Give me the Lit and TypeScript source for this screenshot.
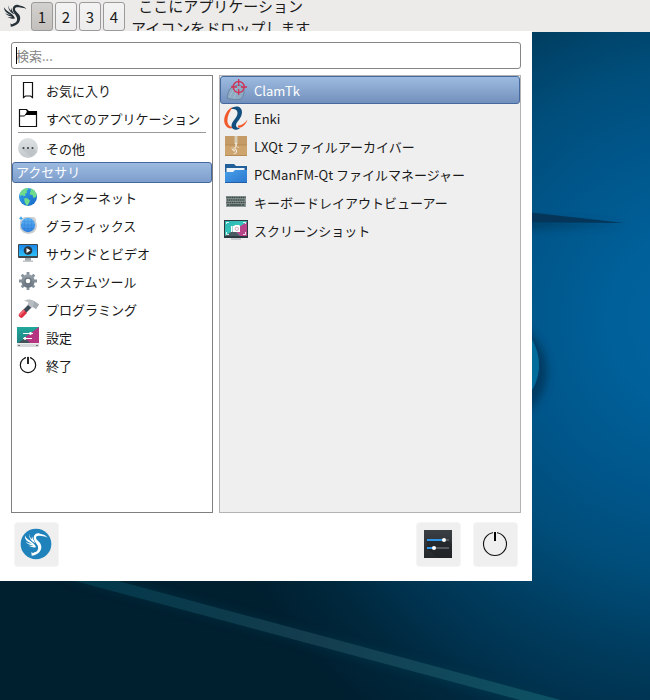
import { LitElement, html, css, svg, nothing } from "lit";
import { customElement, property, state } from "lit/decorators.js";
import { classMap } from "lit/directives/class-map.js";

const bird = svg`
  <path d="M79 24 C73 20 67 20 61 19 C58 18 55 18 52 18 C47 18 44 20 44 24 C44 32 60 37 60 51 C60 67 47 76 31 78 L30 67 C33 71 37 71 39 68 C48 66 52 59 50 51 C47 41 36 34 37 23 C38 13 48 8 56 12 C63 14 72 14 79 24 Z"/>
  <path d="M11 18 C14 26 22 30 30 36 C37 41 42 46 44 53 C36 54 27 52 21 47 C26 49 31 49 36 48 C27 46 17 42 13 36 C18 39 25 42 32 42 C20 37 9 30 11 18 Z"/>
  <path d="M24 12 C24 19 27 24 31 29 L32 20 C34 27 37 33 42 40 C32 36 21 25 24 12 Z"/>`;

const power = svg`<circle cx="12" cy="12" r="7.700" fill="none" stroke="#111" stroke-width="1.200"/>
  <path d="M12 3.500V8" stroke="#fff" stroke-width="4"/><path d="M12 4V11" stroke="#000" stroke-width="1.700"/>`;

const icons: Record<string, unknown> = {
  bookmark: svg`<path d="M7.500 4.500h9v15l-2-1.500h-5l-2 1.500z" fill="none" stroke="#111" stroke-width="1.200"/>`,
  folderOutline: svg`<path d="M3.500 3.500h7l2 2h8v15h-17z" fill="#fff" stroke="#111" stroke-width="1.200"/>
    <path d="M10 4l2 1h9v4h-12l2-3z" fill="#000"/><path d="M3.500 10h5l3-4" fill="none" stroke="#111"/>`,
  other: svg`<defs><linearGradient id="o" x1="0" y1="0" x2="0" y2="1"><stop offset="0" stop-color="#dfe2e3"/><stop offset="1" stop-color="#c3c9cc"/></linearGradient></defs>
    <circle cx="12" cy="12" r="10" fill="url(#o)"/><path d="M6 13h12l3 3-6 5z" fill="#b5bcc0" opacity=".6"/>
    <g fill="#3b4245"><circle cx="7.500" cy="12" r="1.100"/><circle cx="12" cy="12" r="1.100"/><circle cx="16.500" cy="12" r="1.100"/></g>`,
  globe: svg`<defs><linearGradient id="g" x1="0" y1="0" x2="1" y2="1"><stop offset="0" stop-color="#35a8f0"/><stop offset="1" stop-color="#1665c4"/></linearGradient></defs>
    <circle cx="12" cy="12" r="9" fill="url(#g)"/>
    <path d="M4 8C6 4.500 9 3 11.500 3l1 1.500-2 1 .5 2-2 1.500 .5 2-2 0-1-1-2.500 1zM8 13.500l3-.5 3 2.500-1 2.500-2 3-2-3zM15 3.600l3 1.500 2.500 4-.5 3-2.500 1-1-3-3-.5 1-3z" fill="#6fdc8c"/>`,
  graphics: svg`<defs><linearGradient id="b" x1="0" y1="0" x2="0" y2="1"><stop offset="0" stop-color="#62b8f6"/><stop offset="1" stop-color="#2f80dd"/></linearGradient></defs>
    <path d="M8 4h10l2 2v10l-3 4H8l-4-4V8z" fill="#cfd3d6"/><circle cx="12.500" cy="12.500" r="8.500" fill="#c8cccf"/>
    <circle cx="12" cy="12" r="7.200" fill="url(#b)"/>
    <path d="M5 12h14M6 8.500h12M6 15.500h12M12 5v14M8.500 6v12M15.500 6v12" stroke="#1c69c9" stroke-width=".5" opacity=".45"/>
    <path d="M5 3l.7 1.500 1.500.7-1.500.7-.7 1.500-.7-1.500-1.500-.7 1.500-.7z" fill="#32a3ee"/>`,
  video: svg`<defs><linearGradient id="v" x1="0" y1="0" x2="0" y2="1"><stop offset="0" stop-color="#1a86ea"/><stop offset="1" stop-color="#2fc0f7"/></linearGradient></defs>
    <path d="M9 16h6v4H9z" fill="#a4abaf"/><path d="M7 19.500h10v1.500H7z" fill="#c2c7ca"/>
    <rect x="2" y="3" width="20" height="14" rx="1" fill="#3d4850"/><rect x="3" y="4" width="18" height="11" fill="url(#v)"/>
    <circle cx="12" cy="9.500" r="4.300" fill="#2b343a"/><path d="M10.500 7v5l4-2.500z" fill="#fff"/>`,
  gear: svg`<defs><linearGradient id="ge" x1="0" y1="0" x2="0" y2="1"><stop offset="0" stop-color="#9aa3ac"/><stop offset="1" stop-color="#66727d"/></linearGradient></defs>
    <path d="M12 3v18M3 12h18M5.700 5.700l12.600 12.600M18.300 5.700L5.700 18.300" stroke="#84909a" stroke-width="2.800" fill="none"/>
    <circle cx="12" cy="12" r="6.700" fill="url(#ge)"/><circle cx="12" cy="12" r="3.600" fill="#68747e"/><circle cx="12" cy="12" r="2.300" fill="#fff"/>`,
  hammer: svg`<path d="M12.500 7.500l3 3-6 6-3-3z" fill="#3d4a56"/>
    <path d="M7.500 12.500l3.500 3.500-4.500 4.500c-1.500 1.500-5-1.500-3.500-3.500z" fill="#de3043"/><path d="M7.500 12.500l1.500 1.500-5 5-1-2z" fill="#ef6473"/>
    <path d="M8 4C11 2 15 2 18 4l5 3.500-3 4.500-3-2-1.500 1-4-3.500 1-2C11 4.500 10 4 8 4z" fill="#b7bdc1"/><path d="M18 4l5 3.500-3 4.500-3-2z" fill="#a5adb3"/>`,
  settings: svg`<defs><linearGradient id="s" x1="0" y1="0" x2="0" y2="1"><stop offset="0" stop-color="#20a89a"/><stop offset="1" stop-color="#238080"/></linearGradient></defs>
    <path d="M1 2h22v17H1z" fill="url(#s)"/><path d="M23 2v17H14L8 13z" fill="#b53580"/><path d="M1 19l8-6 6 6z" fill="#425359"/>
    <path d="M1 19h22v3H1z" fill="#d6d9db"/><path d="M1 18h22v1H1z" fill="#eceeee"/><path d="M2 20.500h2M20 20.500h2" stroke="#71777a"/>
    <path d="M7 8.500h10M7 13.500h9" stroke="#fff"/><circle cx="14.500" cy="8.500" r="1.400" fill="#fff"/><circle cx="9" cy="13.500" r="1.400" fill="#fff"/>`,
  power,
  clam: svg`<path d="M3 20c1-3 1-8 4-10 4-3 9-4 12-1 2 4 1 9-2 12-4 1-9 1-14-1z" fill="#8fabc4" stroke="#65819c" stroke-width=".9"/>
    <path d="M6 19c1-4 3-7 7-9M10 20c1-4 3-7 6-9" fill="none" stroke="#a9c0d2" stroke-width=".8"/>
    <circle cx="14.700" cy="9" r="5.500" fill="none" stroke="#cf3358" stroke-width="1.400"/>
    <path d="M14.700 1v7M14.700 11v6M7 9h6M17 9h6" stroke="#cf3358" stroke-width="1.300"/>`,
  enki: svg`<path d="M9 1C3 3-1 11 .5 17c1.500 5 6 7 9.500 4-4 0-6-2-6.500-5C3 11 5 6 9 1z" fill="#f2592a"/>
    <path d="M7 3C12-2 20 1 17.500 9c-1 4-5 7-5.500 10 0 2 1.500 3.500 4 3-3 3-8.500 2-8.500-2 0-5 6-8 6-13 0-3.500-3-4.500-6.500-4z" fill="#124e7e"/>
    <path d="M14 21.500c4 1 8-3 9.500-8-3 4-6 6-9.500 6z" fill="#f2592a"/>`,
  archive: svg`<path d="M1 2h22v20H1z" fill="#cda36e"/><path d="M1 2h22v9H1z" fill="#c49a66"/><path d="M1 11h22M1 21.500h22" stroke="#b18650" stroke-width=".8"/>
    <path d="M10.500 2h3v8h-3z" fill="#d9cdb6"/><path d="M11.300 9h1.500v3h-1.500z" fill="#f3eee4"/>
    <g transform="translate(6 11) scale(.12)" fill="#f3eee4">${bird}</g>`,
  folder: svg`<defs><linearGradient id="f" x1="0" y1="0" x2="1" y2="1"><stop offset="0" stop-color="#489fe8"/><stop offset="1" stop-color="#2b78cf"/></linearGradient></defs>
    <path d="M1 2h9l2 2h11v8H1z" fill="#235f99"/><path d="M2.500 6h18v4h-18z" fill="#eef3f7"/><path d="M1 10h8l2-2h12v13H1z" fill="url(#f)"/><path d="M1 20.500h22" stroke="#1f5fa8"/>`,
  keyboard: svg`<path d="M2 6h20v11H2z" fill="#8d9996"/><path d="M2.500 7.500h19M3 10h18M2.500 12.500h19" stroke="#394844" stroke-width="1.700" stroke-dasharray="1.300 .500"/>
    <path d="M3 15h18" stroke="#394844" stroke-width="1.700" stroke-dasharray="2 .500 12 .500"/>`,
  screenshot: svg`<defs><linearGradient id="sc" x1="0" y1="0" x2="1" y2="1"><stop offset="0" stop-color="#29b4b4"/><stop offset="1" stop-color="#45d8c2"/></linearGradient></defs>
    <path d="M0 2h24v18H0z" fill="#2e383f"/><path d="M1 3h22v15H1z" fill="url(#sc)"/><path d="M23 4v14h-7l-6-6z" fill="#b8448a"/><path d="M1 18l9-6 6 6z" fill="#4a5a60"/>
    <path d="M7 20.500h10v1H7z" fill="#a2a9ad"/><path d="M2.500 6V4.500H5M19 4.500h2.500V6M2.500 14v2.500H5M19 16.500h2.500V14" fill="none" stroke="#fff" stroke-width=".8"/>
    <path d="M7 8h1.500v6H7zM9 8h1l1-1h4l1 1v6H9z" fill="#fff"/><circle cx="12.800" cy="10.800" r="1.700" fill="none" stroke="#c98fb0" stroke-width=".8"/>`,
};

interface Entry { icon: string; label: string }

const topEntries: Entry[] = [
  { icon: "bookmark", label: "お気に入り" },
  { icon: "folderOutline", label: "すべてのアプリケーション" },
];
const categories: Entry[] = [
  { icon: "other", label: "その他" },
  { icon: "", label: "アクセサリ" },
  { icon: "globe", label: "インターネット" },
  { icon: "graphics", label: "グラフィックス" },
  { icon: "video", label: "サウンドとビデオ" },
  { icon: "gear", label: "システムツール" },
  { icon: "hammer", label: "プログラミング" },
  { icon: "settings", label: "設定" },
  { icon: "power", label: "終了" },
];
const apps: Entry[] = [
  { icon: "clam", label: "ClamTk" },
  { icon: "enki", label: "Enki" },
  { icon: "archive", label: "LXQt ファイルアーカイバー" },
  { icon: "folder", label: "PCManFM-Qt ファイルマネージャー" },
  { icon: "keyboard", label: "キーボードレイアウトビューアー" },
  { icon: "screenshot", label: "スクリーンショット" },
];

@customElement("menu-row")
class MenuRow extends LitElement {
  @property() icon = "";
  @property() label = "";
  @property({ type: Boolean }) selected = false;

  static styles = css`
    :host { display: block; }
    .row {
      display: flex; align-items: center; gap: 6px; width: 100%; height: 28px;
      box-sizing: border-box; margin: 0; padding: 0 3px; border: 1px solid transparent; border-radius: 3px;
      background: none; color: #1a1a1a; font: inherit; text-align: left; white-space: nowrap;
    }
    .icon { width: 24px; height: 24px; flex: none; display: block; }
    .label { padding-top: 2px; }
    .selected { color: #fff; border-color: #4468a0; background: linear-gradient(#9dbbe0, #7390bd); }
    .plain { height: 21px; background: linear-gradient(#9dbbe0, #7d9dcc); }
    .plain .label { padding: 0 0 1px; }
  `;

  render() {
    return html`<button class=${classMap({ row: true, selected: this.selected, plain: !this.icon })}>
      ${this.icon ? html`<svg class="icon" viewBox="0 0 24 24" aria-hidden="true">${icons[this.icon]}</svg>` : nothing}
      <span class="label">${this.label}</span>
    </button>`;
  }
}

@customElement("desktop-wallpaper")
class DesktopWallpaper extends LitElement {
  static styles = css`
    :host { display: block; background: radial-gradient(circle at 700px 320px, #0064a0 0, #006099 90px, #00568a 180px, #004d79 260px, #003c5e 340px, #00324e 400px, #00283d 450px, #001f2f 520px); }
    .art { display: block; width: 100%; height: 100%; }
  `;
  render() {
    return html`<svg class="art" aria-hidden="true">
      <defs>
        <filter id="soft" x="-30%" y="-50%" width="160%" height="200%"><feGaussianBlur stdDeviation="4"/></filter>
        <filter id="glow" x="-10%" y="-30%" width="120%" height="160%"><feGaussianBlur stdDeviation="6"/></filter>
        <linearGradient id="beam" gradientUnits="userSpaceOnUse" x1="60" y1="580" x2="560" y2="700">
          <stop offset="0" stop-color="#00384a"/><stop offset=".5" stop-color="#143d4e"/><stop offset="1" stop-color="#0d5265"/>
        </linearGradient>
      </defs>
      <path d="M500 218L624 224 500 230z" fill="#003456" opacity=".7" filter="url(#soft)"/>
      <path d="M500 209L624 223 500 222z" fill="#053558"/>
      <ellipse cx="498" cy="371" rx="49" ry="50" fill="#003255" opacity=".75" filter="url(#soft)"/>
      <circle cx="490" cy="365" r="49" fill="#006c9c"/>
      <path d="M60 575L535 705H570L95 575z" fill="#004b5c" opacity=".4" filter="url(#glow)"/>
      <path d="M75 581L524 701H564L118 581z" fill="url(#beam)"/>
    </svg>`;
  }
}

@customElement("app-root")
class AppRoot extends LitElement {
  @state() private workspace = 1;

  static styles = css`
    :host {
      display: block; position: relative; min-height: 100vh; overflow: hidden;
      font-family: "Noto Sans CJK JP", sans-serif; font-size: 13px; line-height: 20px; color: #1a1a1a;
    }
    .wallpaper { position: absolute; inset: 0; }
    .panel { position: relative; display: flex; height: 32px; background: #ecebea; }
    .start { width: 31px; padding: 2px 0 0 2px; margin: 0; border: 0; background: none; box-sizing: border-box; display: flex; align-items: flex-start; }
    .start svg { width: 26px; height: 26px; fill: #263238; }
    .spaces { display: flex; gap: 2px; padding: 2px 0 1px; }
    .space {
      width: 22px; padding: 0; border: 1px solid #9a9a9a; border-radius: 3px; background: linear-gradient(#f3f3f3, #ececec);
      font: inherit; font-size: 15px; color: #1a1a1a;
    }
    .space.on { background: linear-gradient(#d3d1cf, #c2bfbc); }
    .drop { margin: -5px 0 0 6px; font-size: 15px; line-height: 22px; text-align: center; white-space: nowrap; }
    .menu { position: relative; width: 532px; max-width: 100%; box-sizing: border-box; margin-top: -1px; padding: 11px 11px 14px; background: #fff; }
    .search { position: relative; }
    .field {
      display: block; width: 100%; height: 27px; box-sizing: border-box; padding: 0 4px; border: 1px solid #858585; border-radius: 3px;
      background: #fff; font: inherit; color: #1a1a1a; outline: none;
    }
    .field::placeholder { color: #858585; opacity: 1; }
    .caret { position: absolute; left: 5px; top: 5px; bottom: 5px; width: 1px; background: #000; }
    .lists { display: grid; grid-template-columns: 202fr 302fr; gap: 6px; margin-top: 6px; }
    .list { min-height: 436px; border: 1px solid #7f7f7f; background: #fff; min-width: 0; }
    .apps { border-color: #b4b4b4; background: #efefef; }
    .rule { height: 1px; margin: 0 6px 1px; border: 0; background: #999; }
    .actions { display: flex; gap: 12px; padding: 0 3px; margin-top: 9px; }
    .action {
      width: 45px; height: 45px; box-sizing: border-box; padding: 3px; border: 1px solid #f5f5f5; border-radius: 4px; background: #efefef;
      display: flex; align-items: flex-start;
    }
    .about { margin-right: auto; }
    .action svg { flex: none; width: 36px; height: 36px; }
  `;

  render() {
    return html`
      <desktop-wallpaper class="wallpaper"></desktop-wallpaper>
      <header class="panel">
        <button class="start" aria-label="メニュー"><svg viewBox="4 2 80 80" aria-hidden="true">${bird}</svg></button>
        <nav class="spaces">
          ${[1, 2, 3, 4].map((n) => html`<button class=${classMap({ space: true, on: n === this.workspace })}
            @click=${() => (this.workspace = n)}>${n}</button>`)}
        </nav>
        <div class="drop">ここにアプリケーション<br>アイコンをドロップします</div>
      </header>
      <main class="menu">
        <div class="search">
          <input class="field" type="text" placeholder="検索..." aria-label="検索">
          <span class="caret"></span>
        </div>
        <div class="lists">
          <nav class="list">
            ${topEntries.map((e) => html`<menu-row .icon=${e.icon} .label=${e.label}></menu-row>`)}
            <hr class="rule">
            ${categories.map((e) => html`<menu-row .icon=${e.icon} .label=${e.label} .selected=${!e.icon}></menu-row>`)}
          </nav>
          <section class="list apps">
            ${apps.map((e, i) => html`<menu-row .icon=${e.icon} .label=${e.label} .selected=${i === 0}></menu-row>`)}
          </section>
        </div>
        <footer class="actions">
          <button class="action about" aria-label="LXQt">
            <svg viewBox="0 0 108 108" aria-hidden="true"><circle cx="54" cy="54" r="46" fill="#1f82ba"/><g transform="translate(10 11)" fill="#fff">${bird}</g></svg>
          </button>
          <button class="action" aria-label="設定">
            <svg viewBox="0 0 36 36" aria-hidden="true">
              <defs><linearGradient id="d" x1="0" y1="0" x2="0" y2="1"><stop offset="0" stop-color="#3a3f44"/><stop offset="1" stop-color="#25282b"/></linearGradient></defs>
              <path d="M4 4h28v28H4z" fill="url(#d)"/><path d="M7 15h22l3 3v14H18L7 23z" fill="#1d2022" opacity=".5"/>
              <path d="M7 14h22M7 22h22" stroke="#55595d" stroke-width="2"/>
              <path d="M7 14h17M7 22h7" stroke="#2f95e6" stroke-width="2"/>
              <circle cx="24" cy="14" r="2" fill="#fff"/><circle cx="14" cy="22" r="2" fill="#fff"/>
            </svg>
          </button>
          <button class="action" aria-label="終了">
            <svg viewBox="0 0 36 36" aria-hidden="true"><circle cx="18" cy="18" r="11.500" fill="none" stroke="#111" stroke-width="1.100"/>
              <path d="M18 5v6" stroke="#efefef" stroke-width="4"/><path d="M18 6v9" stroke="#000" stroke-width="2"/></svg>
          </button>
        </footer>
      </main>`;
  }
}
